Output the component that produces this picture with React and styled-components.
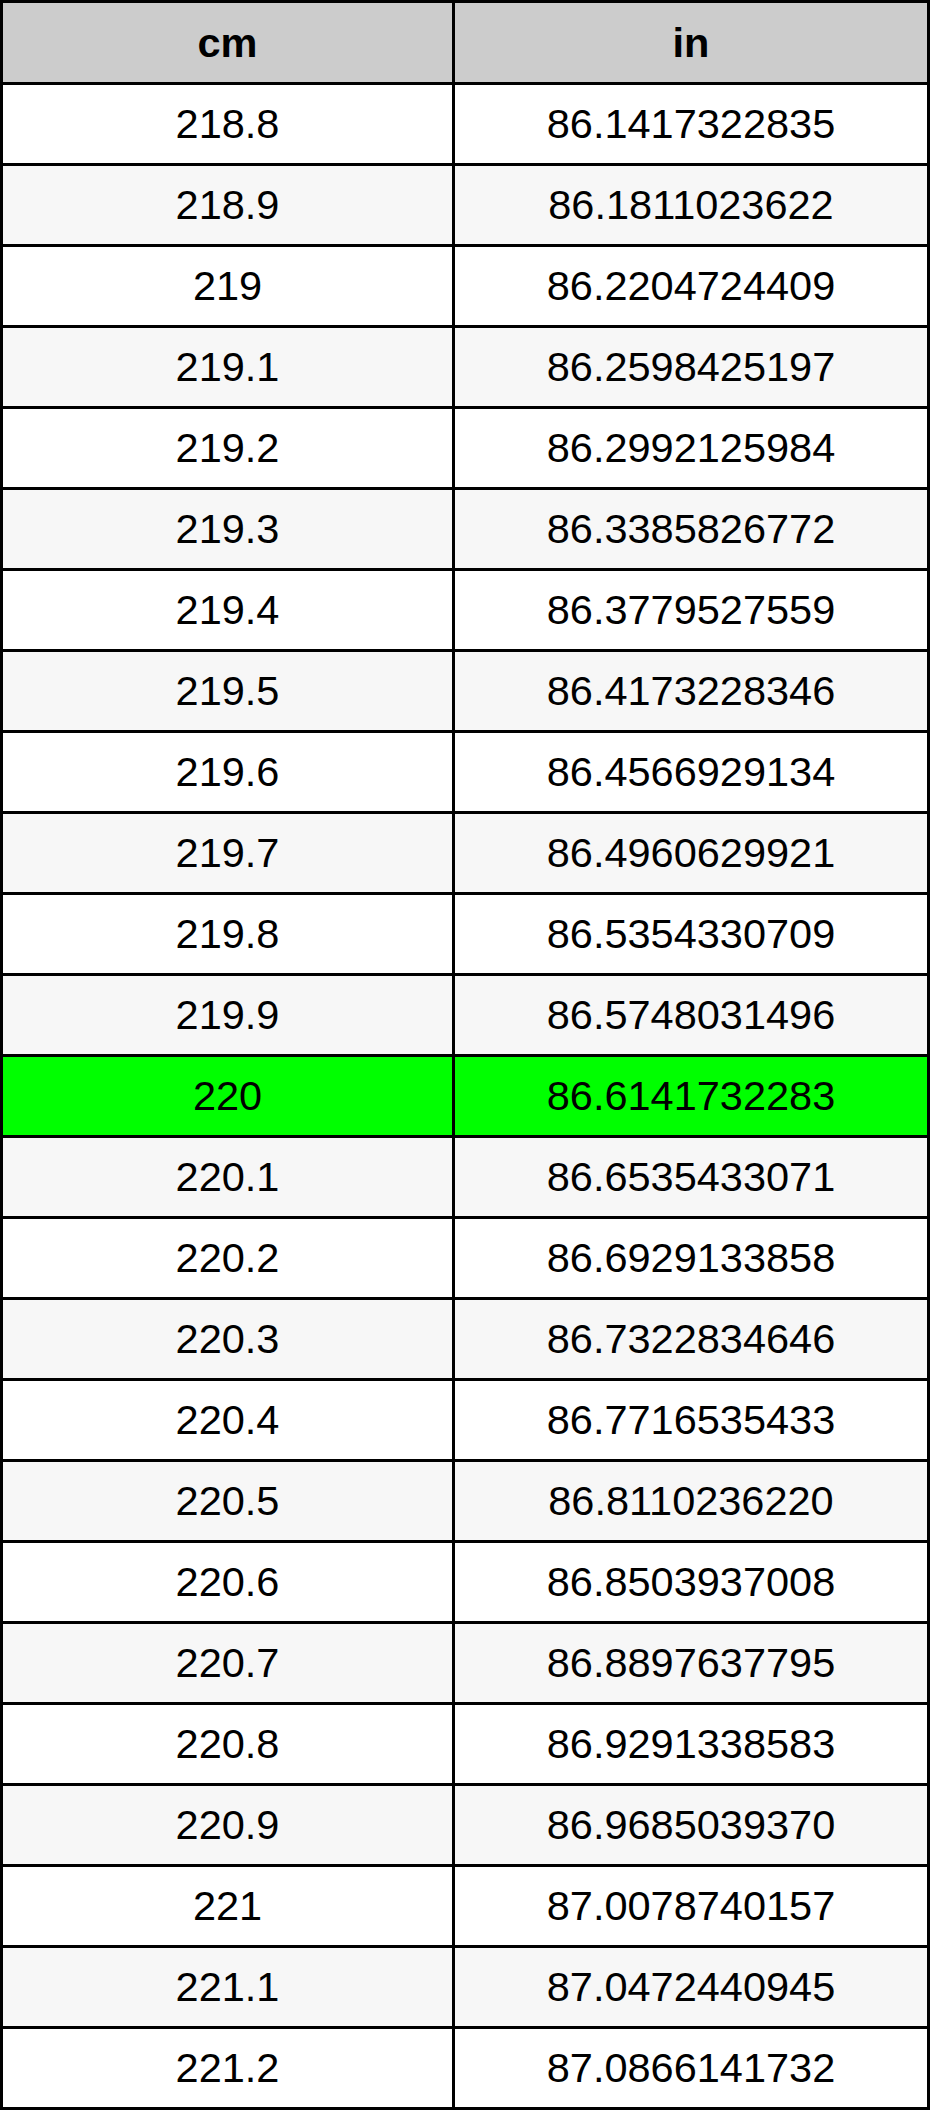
import React from 'react'
import styled, { createGlobalStyle } from 'styled-components'

const GlobalStyle = createGlobalStyle`
  html, body {
    margin: 0;
    padding: 0;
    background: #fff;
  }
  body {
    font-family: "Liberation Sans", Arial, sans-serif;
    color: #000;
  }
`

const rows = [
  ['218.8', '86.1417322835'],
  ['218.9', '86.1811023622'],
  ['219', '86.2204724409'],
  ['219.1', '86.2598425197'],
  ['219.2', '86.2992125984'],
  ['219.3', '86.3385826772'],
  ['219.4', '86.3779527559'],
  ['219.5', '86.4173228346'],
  ['219.6', '86.4566929134'],
  ['219.7', '86.4960629921'],
  ['219.8', '86.5354330709'],
  ['219.9', '86.5748031496'],
  ['220', '86.6141732283'],
  ['220.1', '86.6535433071'],
  ['220.2', '86.6929133858'],
  ['220.3', '86.7322834646'],
  ['220.4', '86.7716535433'],
  ['220.5', '86.8110236220'],
  ['220.6', '86.8503937008'],
  ['220.7', '86.8897637795'],
  ['220.8', '86.9291338583'],
  ['220.9', '86.9685039370'],
  ['221', '87.0078740157'],
  ['221.1', '87.0472440945'],
  ['221.2', '87.0866141732'],
]

const Table = styled.div`
  display: grid;
  grid-template-columns: 449px 472px;
  grid-template-rows: 79px repeat(${rows.length}, 78px);
  gap: 3px;
  padding: 3px;
  width: 930px;
  box-sizing: border-box;
  background: #000;
`

const Cell = styled.div`
  display: flex;
  align-items: center;
  justify-content: center;
  font-size: 41.5px;
  line-height: 1;
  background: ${props =>
    props.$active ? '#00ff00' : props.$striped ? '#f7f7f7' : '#ffffff'};
`

const HeadCell = styled(Cell)`
  background: #cccccc;
  font-weight: bold;
`

export default function App() {
  return (
    <>
      <GlobalStyle />
      <Table>
        <HeadCell>cm</HeadCell>
        <HeadCell>in</HeadCell>
        {rows.map(([cm, inch], idx) => {
          const active = cm === '220'
          const striped = idx % 2 === 1
          return (
            <React.Fragment key={cm}>
              <Cell $active={active} $striped={striped}>{cm}</Cell>
              <Cell $active={active} $striped={striped}>{inch}</Cell>
            </React.Fragment>
          )
        })}
      </Table>
    </>
  )
}
